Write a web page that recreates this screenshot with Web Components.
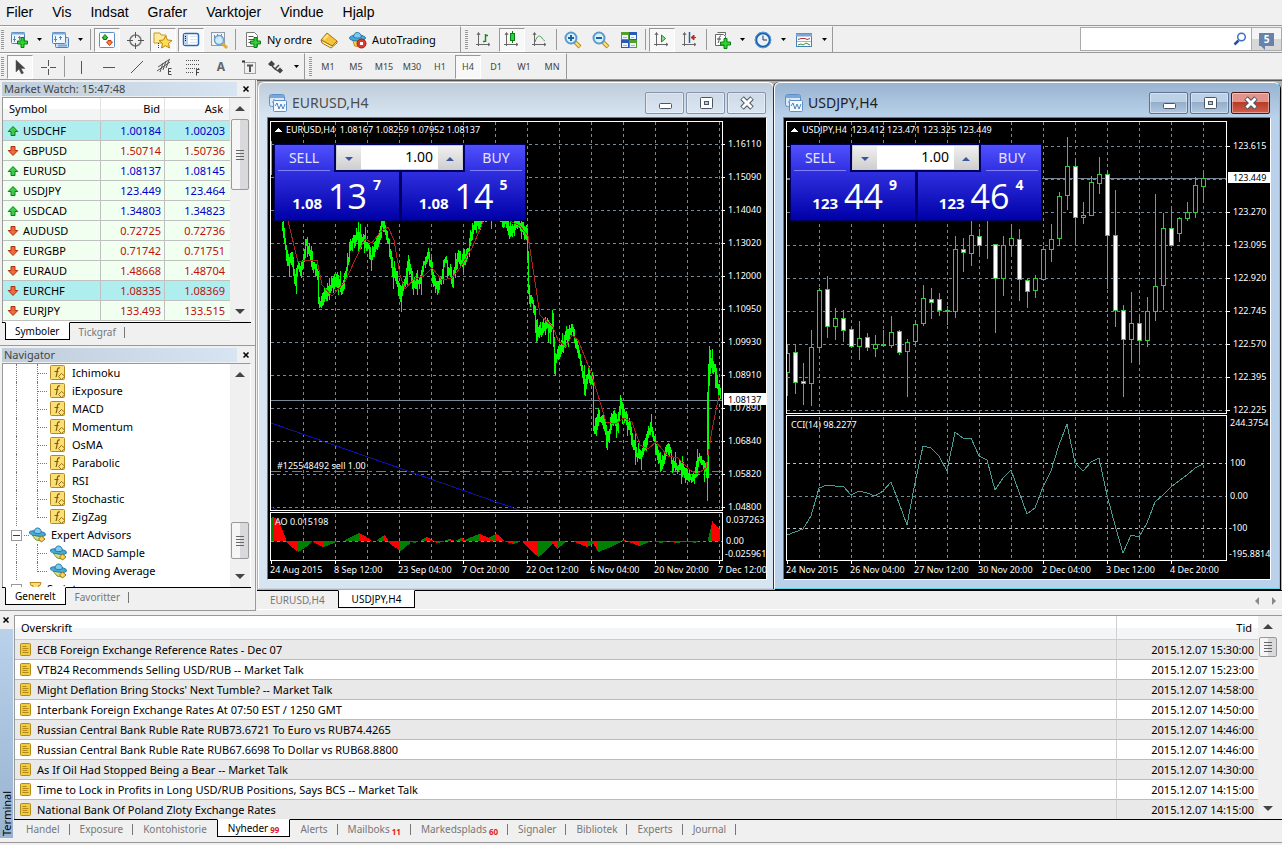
<!DOCTYPE html>
<html lang="da">
<head>
<meta charset="utf-8">
<title>Terminal</title>
<style>
  html, body {
    margin: 0;
    height: 100%;
  }

  body {
    background: #f0f0f0;
    color: #000;
    font: 11px/14px "Noto Sans", "Open Sans", sans-serif;
  }
</style>
</head>
<body>
<trade-app></trade-app>

<script>
const svg = (w, h, body) => `<svg width="${w}" height="${h}" viewBox="0 0 ${w} ${h}" aria-hidden="true">${body}</svg>`;

const axes = '<path d="M3.500 2v13M1 13.500h14M2 4l1.500-2.500L5 4M13 12l2 1.500-2 1.500" fill="none" stroke="#666"/>';
const plus = (x, y) => `<path transform="translate(${x} ${y})" d="M4 .5h3v3.500h3.500v3H7v3.500H4V7H.5V4H4z" fill="#2fd32f" stroke="#0a7d14"/>`;
const lens = (sign) => `<path d="M11 11l5 5" stroke="#b98a1c" stroke-width="4"/><path d="M11.500 11.500l4 4" stroke="#ffe27a" stroke-width="2"/><circle cx="7" cy="7" r="5.500" fill="#d9f1fc" stroke="#5a9bcb" stroke-width="2"/><path d="${sign}" stroke="#1f5f9e" stroke-width="2"/>`;
const hat = '<path d="M3.500 8l11 1-2 7-7-1z" fill="#f5cf4f" stroke="#c2921d"/><ellipse cx="8.500" cy="7" rx="8" ry="3" fill="#4aa8d8" stroke="#2379a8"/><path d="M4.500 6c0-6 7.500-6 8 0-2 1.500-6 1.500-8 0z" fill="#7dcbee" stroke="#2379a8"/>';

const icons = {
  newchart: svg(18, 18, '<rect x="1.500" y="1.500" width="13" height="11" rx="1" fill="#eef5fd" stroke="#4f7fb5"/><path d="M1 2.500h14" stroke="#7ba7d8" stroke-width="2"/><path d="M4.500 11V5M3 8.500h3M9.500 9V5M8 6.500h3" stroke="#5a86b8"/>' + plus(7, 6)),
  profiles: svg(18, 18, '<rect x="4.500" y="6.500" width="13" height="10" rx="1" fill="#cfe1f4" stroke="#4f7fb5"/><rect x="1.500" y="1.500" width="13" height="11" rx="1" fill="#eef5fd" stroke="#4f7fb5"/><path d="M1 2.500h14M7 14.500h9" stroke="#7ba7d8" stroke-width="2"/><path d="M4.500 11V5M3 8.500h3M9.500 9V5M8 6.500h3" stroke="#5a86b8"/>'),
  market: svg(18, 18, '<rect x="1.500" y="1.500" width="15" height="15" rx="1" fill="#fff" stroke="#5a8ec8"/><path d="M5.500 8.500V7H4l3-3.500L10 7H8.500v1.500z" fill="#39c639" stroke="#0d7d1a"/><path d="M10 9.500V11H8.500l3 3.500 3-3.500H13V9.500z" fill="#ff8455" stroke="#c33a14"/>'),
  cross: svg(18, 18, '<circle cx="9.500" cy="9.500" r="5.500" fill="none" stroke="#777" stroke-width="1.500"/><path d="M9.500 1v6M9.500 12v6M1 9.500h6M12 9.500h6" stroke="#555"/>'),
  favorites: svg(20, 18, '<path d="M1 2h6l1 2h5v8H1z" fill="#ffeb9c" stroke="#c79b22"/><path d="M5.500 12v5" stroke="#333" stroke-dasharray="1 1"/><path d="M12.500 5l2 4 4.500.5-3.500 3 1 4.500-4-2.300-4 2.300 1-4.500-3.500-3 4.500-.5z" fill="#ffdc55" stroke="#b8860b"/>'),
  terminal: svg(18, 18, '<rect x="1.500" y="2.500" width="15" height="12" rx="2" fill="#fff" stroke="#2c6ab5" stroke-width="1.500"/><rect x="2" y="3" width="4" height="11" fill="#b9d3f2"/><path d="M3 5.500h1M3 7.500h1M3 9.500h1" stroke="#111"/><path d="M8 5.500h7M8 8.500h7M8 11.500h7" stroke="#dbe6f5"/>'),
  tester: svg(19, 18, '<rect x="1.500" y="1.500" width="13" height="13" fill="#f2f5f8" stroke="#8e9aa8"/><path d="M4.500 4v7M7.500 3v5M11.500 3v5" stroke="#7d8894"/><path d="M12 12l5 5" stroke="#e0ad33" stroke-width="3"/><circle cx="9" cy="9" r="4.500" fill="#c9e8fb" fill-opacity=".8" stroke="#6ba3d0" stroke-width="1.500"/>'),
  neworder: svg(18, 18, '<path d="M2.500 1.500h8l3 3v11h-11z" fill="#fff" stroke="#777"/><path d="M4.500 5.500h5M4.500 8.500h6M4.500 11.500h3" stroke="#555"/>' + plus(6, 6)),
  book: svg(18, 18, '<path d="M7 2l10 8-5 5L1 9z" fill="#f4c53a" stroke="#a8730c"/><path d="M1 9l1 3 9 5 6-5v-2l-5 5z" fill="#fff2c2" stroke="#a8730c"/><path d="M8 4L4 8" stroke="#ffe89a" stroke-width="2"/>'),
  auto: svg(18, 18, hat + '<circle cx="12.500" cy="12.500" r="4.500" fill="#e0392a" stroke="#a81d12"/><rect x="11" y="11" width="3" height="3" fill="#fff"/>'),
  bars: svg(17, 17, axes + '<path d="M10.500 3v8M8 10.500h2M11 4.500h2" stroke="#119122" stroke-width="1.500" fill="none"/>'),
  candles: svg(17, 17, axes + '<path d="M9.500 0v12" stroke="#0b7d18"/><rect x="7.500" y="2.500" width="4" height="7" fill="#28d33c" stroke="#0b7d18"/>'),
  line: svg(17, 17, axes + '<path d="M4 11c2-7 5-7 7-4 1 2 2 2 3 3" fill="none" stroke="#4b9b58"/>'),
  zoomin: svg(18, 18, lens('M4 7h6M7 4v6')),
  zoomout: svg(18, 18, lens('M4 7h6')),
  tile: svg(18, 18, '<path d="M1 1h8v8H1z" fill="#4fa12b"/><path d="M9 1h8v8H9z" fill="#2859b8"/><path d="M1 9h8v8H1z" fill="#2859b8"/><path d="M9 9h8v8H9z" fill="#4fa12b"/><path d="M2 4h6v4H2zM10 4h6v4h-6zM2 12h6v4H2zM10 12h6v4h-6z" fill="#eef6ff"/><path d="M3 6.500h4M11 6.500h3M3 14.500h4M11 14.500h4" stroke="#9bb8d6"/>'),
  scroll: svg(17, 17, axes + '<path d="M8.500 4l4 3.500-4 3.500z" fill="#8fe08f" stroke="#119122"/>'),
  shift: svg(17, 17, axes + '<path d="M8.500 1v11" stroke="#2563a8" stroke-width="1.500"/><path d="M15 6.500h-4M13 4l-3 2.500L13 9z" fill="#b23414" stroke="#b23414"/>'),
  indicators: svg(18, 18, '<path d="M4.500 1.500h8v3M2.500 3.500h8l2 2v9h-10z" fill="#fff" stroke="#666"/><path d="M8 5c-3 0-1 4-3 7M4 8h4" fill="none" stroke="#444"/>' + plus(7, 7)),
  clock: svg(18, 18, '<circle cx="9" cy="9" r="7" fill="#e9f2fa" stroke="#1d5ea8" stroke-width="2.500"/><circle cx="9" cy="9" r="7.800" fill="none" stroke="#5aa0e0"/><path d="M9 4.500V9h4" fill="none" stroke="#333"/>'),
  template: svg(18, 18, '<rect x="1.500" y="2.500" width="15" height="13" fill="#fff" stroke="#4a80b8"/><path d="M1 4h16" stroke="#7ba7d8" stroke-width="3"/><path d="M2 10.500h14" stroke="#9bb8d6"/><path d="M3 8.500l3-1h4l2 1 3-1" fill="none" stroke="#a33"/><path d="M3 14l3-1 2 1 3-2 4 2" fill="none" stroke="#393"/>'),
  cursor: svg(12, 16, '<path d="M2 1v12l3-3 2.500 5 2-1L7 9.500h4z" fill="#444" stroke="#555" stroke-width=".5"/>'),
  hair: svg(18, 18, '<path d="M9.500 2v6M9.500 11v6M2 9.500h6M11 9.500h6" stroke="#555"/>'),
  vline: svg(18, 18, '<path d="M9.500 3v13" stroke="#555"/>'),
  hline: svg(18, 18, '<path d="M3 9.500h12" stroke="#555"/>'),
  trend: svg(18, 18, '<path d="M3 15L15 3" stroke="#555"/>'),
  channel: svg(18, 18, '<path d="M1 13L14 4M2 9l12-8M4 14l3-9M7 12l3-9M10 10l3-8" stroke="#555"/><path d="M15.500 10.500h-3v6h3M12.500 13.500h2.500" stroke="#444" fill="none"/>'),
  fibo: svg(18, 18, '<path d="M2 2.500h14M2 6.500h14M2 10.500h14M2 14.500h8" stroke="#555" stroke-dasharray="1 1"/><path d="M15.500 11.500h-3v6M12.500 14.500h2.500" stroke="#444" fill="none"/>'),
  textbox: svg(18, 18, '<rect x="4.500" y="4.500" width="11" height="11" fill="none" stroke="#555" stroke-dasharray="1 1"/><path d="M2 3.500h3" stroke="#333" stroke-width="2"/><path d="M7 7.500h6M10 7v7" stroke="#555" stroke-width="2"/>'),
  shapes: svg(18, 18, '<path d="M1 6l3.500-3.500L8 6l-2 2H3zM10 12.500h6l-3-3zM10 12.500l3 3 3-3z" fill="#444"/><path d="M5 8l3 3 4-4M8 11l3 2" fill="none" stroke="#444" stroke-width="1.500"/>'),
  down: svg(7, 4, '<path d="M1 0h5L3.500 3z" fill="#000"/>'),
  close: svg(8, 8, '<path d="M1.500 1.500l5 5M6.500 1.500l-5 5" stroke="#000" stroke-width="1.500"/>'),
  search: svg(14, 14, '<path d="M1.500 12.500l4-4" stroke="#1f4fa8" stroke-width="2.500"/><circle cx="8.500" cy="5" r="3.800" fill="#fff" stroke="#3f6fc4" stroke-width="1.500"/>'),
  rise: svg(12, 12, '<path d="M4 10.500V6.500H1.200L6 1.500l4.800 5H8v4z" fill="#3ccb4b" stroke="#0d7d1a"/>'),
  fall: svg(12, 12, '<path d="M4 1.500v4H1.200L6 10.500l4.800-5H8v-4z" fill="#f0693c" stroke="#b0300d"/>'),
  indicator: svg(16, 16, '<rect x=".5" y=".5" width="14" height="14" rx="1" fill="#fbdf75" stroke="#b58a22"/><path d="M10 3c-4-1-2 5-4 9M4.500 6.500h4" fill="none" stroke="#7a5a10" stroke-width="1.200"/><path d="M11.500 8.500l3.500 3-3.500 3-3-3z" fill="#ffe27a" stroke="#9b7413"/>'),
  expert: svg(18, 16, '<path d="M3 8l11 1-2 5-5-1z" fill="#d9e27a" stroke="#7d9440"/><ellipse cx="8.500" cy="6.500" rx="8" ry="2.500" transform="rotate(8 8 6)" fill="#4aa8d8" stroke="#2379a8"/><path d="M5 5.500c0-6 7-6 7.500 0-2 1.500-5.500 1.500-7.500 0z" fill="#7dcbee" stroke="#2379a8"/><path d="M12.500 9l3.500 3-3.500 3-3-3z" fill="#ffd34d" stroke="#9b7413"/>'),
  script: svg(14, 16, '<path d="M1 1.500h11l-1 3H9.500L11 15H3L4 4.500H2z" fill="#fbdf75" stroke="#b58a22"/>'),
  news: svg(12, 13, '<rect x=".5" y=".5" width="10" height="12" rx="1" fill="#f5cb3c" stroke="#b08a1a"/><path d="M2.500 3.500h4M2.500 5.500h6M2.500 7.500h5M2.500 9.500h6" stroke="#b08a1a"/>'),
  chartwin: svg(20, 20, '<rect x="1.500" y="1.500" width="15" height="12" rx="2" fill="#d9e9fa" stroke="#5d8fc9"/><path d="M2 3.500h14" stroke="#7ba7d8" stroke-width="3"/><path d="M4 9h4M6 6v5" stroke="#5d8fc9"/><rect x="5.500" y="7.500" width="13" height="11" rx="1" fill="#f4f9ff" stroke="#5d8fc9"/><path d="M7 13l2-3 2 6 2-5 2 5 2-5" fill="none" stroke="#4c83c4"/>'),
  min: svg(16, 16, '<rect x="2.500" y="8.500" width="12" height="5" rx="1" fill="#fff" stroke="#4b5566"/>'),
  max: svg(16, 16, '<rect x="2.500" y="2.500" width="12" height="11" rx="1" fill="#fff" stroke="#4b5566"/><rect x="6.500" y="6.500" width="4" height="3" fill="#b9cbe0" stroke="#4b5566"/>'),
  x: svg(16, 16, '<path d="M3 3l10 10M13 3L3 13" stroke="#4b5566" stroke-width="5"/><path d="M3.500 3.500l9 9M12.500 3.500l-9 9" stroke="#fff" stroke-width="3"/>'),
};

class MtIcon extends HTMLElement {
  constructor() {
    super();
    this.attachShadow({ mode: 'open' });
  }

  connectedCallback() {
    this.shadowRoot.innerHTML = `
      <style>
        :host { display: inline-flex; flex: none; }
        svg { display: block; }
      </style>
      ${icons[this.getAttribute('name')] || ''}`;
  }
}
customElements.define('mt-icon', MtIcon);

class MenuBar extends HTMLElement {
  constructor() {
    super();
    this.attachShadow({ mode: 'open' });
    const items = ['Filer', 'Vis', 'Indsat', 'Grafer', 'Varktojer', 'Vindue', 'Hjalp'];
    this.shadowRoot.innerHTML = `
      <style>
        :host {
          display: block;
          border-bottom: 1px solid #999;
        }
        nav {
          display: flex;
          gap: 19px;
          padding: 0 6px;
        }
        button {
          border: 0;
          padding: 0;
          background: none;
          font: 14px/25px "Liberation Sans", Arial, sans-serif;
        }
      </style>
      <nav>${items.map((item) => `<button>${item}</button>`).join('')}</nav>`;
  }
}
customElements.define('menu-bar', MenuBar);

/* One segment of a toolbar: grip on the left, edge on the right. */
class ToolGroup extends HTMLElement {
  constructor() {
    super();
    this.attachShadow({ mode: 'open' });
    this.shadowRoot.innerHTML = `
      <style>
        :host {
          display: flex;
          align-items: center;
          height: 26px;
          box-sizing: border-box;
          border-right: 1px solid #999;
          border-top: 1px solid #fff;
        }
        :host::before {
          content: '';
          width: 3px;
          height: 20px;
          margin: 0 2px 0 1px;
          background: repeating-linear-gradient(#999 0 1px, transparent 1px 2px);
        }
        :host(.next)::before { margin: 0 2px 0 4px; }
      </style>
      <slot></slot>`;
  }
}
customElements.define('tool-group', ToolGroup);

class ToolButton extends HTMLElement {
  constructor() {
    super();
    this.attachShadow({ mode: 'open' });
  }

  connectedCallback() {
    const icon = this.getAttribute('icon');
    const menu = this.hasAttribute('menu');
    this.shadowRoot.innerHTML = `
      <style>
        :host { display: flex; }
        button {
          display: flex;
          align-items: center;
          justify-content: center;
          gap: 5px;
          min-width: 26px;
          height: 24px;
          margin: 0 1px;
          padding: 0;
          border: 1px solid transparent;
          background: none;
          color: #000;
          font: inherit;
        }
        :host([small]) button { color: #444; font-size: 9px; }
        :host([pressed]) button {
          border-color: #999 #fff #fff #999;
          background: #f8f8f8;
        }
        :host([wide]) button { padding: 0 1px 0 4px; }
        :host([menu]) button { min-width: 24px; }
        :host([menu]) .menu {
          width: 15px;
          min-width: 15px;
          margin: 0;
        }
      </style>
      <button title="${this.getAttribute('label') || ''}">
        ${icon ? `<mt-icon name="${icon}"></mt-icon>` : ''}<slot></slot>
      </button>
      ${menu ? '<button class="menu" title="Menu"><mt-icon name="down"></mt-icon></button>' : ''}`;
  }
}
customElements.define('tool-button', ToolButton);

class ToolBars extends HTMLElement {
  constructor() {
    super();
    this.attachShadow({ mode: 'open' });
    const periods = ['M1', 'M5', 'M15', 'M30', 'H1', 'H4', 'D1', 'W1', 'MN'];
    this.shadowRoot.innerHTML = `
      <style>
        :host { display: block; }
        .row {
          display: flex;
          border-bottom: 1px solid #999;
        }
        .sep {
          width: 1px;
          height: 21px;
          margin: 0 2px;
          background: #999;
        }
        .first { padding-right: 21px; }
        .search {
          display: flex;
          margin: 1px 0 1px auto;
          height: 22px;
          border: 1px solid #aaa;
          background: #fff;
        }
        .search input {
          width: 140px;
          border: 0;
          padding: 0 4px;
          outline: 0;
          background: none;
          font: inherit;
        }
        .search button {
          display: flex;
          align-items: center;
          border: 0;
          padding: 0 4px;
          background: none;
        }
        .search .mail {
          width: 30px;
          justify-content: center;
          border-left: 1px solid #aaa;
          background: linear-gradient(#f4f4f4 50%, #d8d8d8 50%);
        }
        .badge {
          position: relative;
          padding: 0 5px;
          background: #6782ad;
          color: #fff;
          font: 700 10px/13px "Noto Sans", sans-serif;
        }
        .badge::after {
          content: '';
          position: absolute;
          left: 2px;
          top: 13px;
          border: 2px solid transparent;
          border-top-color: #6782ad;
          border-right-color: #6782ad;
        }
        .letter { color: #666; font-weight: 700; font-size: 12px; }
      </style>
      <div class="row">
        <tool-group class="first">
          <tool-button icon="newchart" label="Ny graf" menu></tool-button>
          <tool-button icon="profiles" label="Profiler" menu></tool-button>
          <span class="sep"></span>
          <tool-button icon="market" label="Market Watch" pressed></tool-button>
          <tool-button icon="cross" label="Data"></tool-button>
          <tool-button icon="favorites" label="Navigator" pressed></tool-button>
          <tool-button icon="terminal" label="Terminal" pressed></tool-button>
          <tool-button icon="tester" label="Strategi Tester"></tool-button>
          <span class="sep"></span>
          <tool-button icon="neworder" wide>Ny ordre</tool-button>
          <tool-button icon="book" label="MetaEditor"></tool-button>
          <tool-button icon="auto" wide>AutoTrading</tool-button>
        </tool-group>
        <tool-group class="next">
          <tool-button icon="bars" label="Barer"></tool-button>
          <tool-button icon="candles" label="Candlesticks" pressed></tool-button>
          <tool-button icon="line" label="Linje"></tool-button>
          <span class="sep"></span>
          <tool-button icon="zoomin" label="Zoom ind"></tool-button>
          <tool-button icon="zoomout" label="Zoom ud"></tool-button>
          <tool-button icon="tile" label="Fliser"></tool-button>
          <span class="sep"></span>
          <tool-button icon="scroll" label="Auto Scroll" pressed></tool-button>
          <tool-button icon="shift" label="Graf Skift"></tool-button>
          <span class="sep"></span>
          <tool-button icon="indicators" label="Indikatorer" menu></tool-button>
          <tool-button icon="clock" label="Perioder" menu></tool-button>
          <tool-button icon="template" label="Skabeloner" menu></tool-button>
        </tool-group>
        <div class="search">
          <input aria-label="Search">
          <button title="Search"><mt-icon name="search"></mt-icon></button>
          <button class="mail"><span class="badge">5</span></button>
        </div>
      </div>
      <div class="row">
        <tool-group>
          <tool-button icon="cursor" label="Cursor" pressed></tool-button>
          <tool-button icon="hair" label="Crosshair"></tool-button>
          <span class="sep"></span>
          <tool-button icon="vline" label="Vertikal linje"></tool-button>
          <tool-button icon="hline" label="Horisontal linje"></tool-button>
          <tool-button icon="trend" label="Trendlinje"></tool-button>
          <tool-button icon="channel" label="Kanal"></tool-button>
          <tool-button icon="fibo" label="Fibonacci"></tool-button>
          <tool-button label="Tekst"><span class="letter">A</span></tool-button>
          <tool-button icon="textbox" label="Tekst label"></tool-button>
          <tool-button icon="shapes" label="Pile" menu></tool-button>
        </tool-group>
        <tool-group class="next">
          ${periods.map((p) => `<tool-button small ${p === 'H4' ? 'pressed' : ''}>${p}</tool-button>`).join('')}
        </tool-group>
      </div>`;
  }
}
customElements.define('tool-bars', ToolBars);

class ScrollRail extends HTMLElement {
  constructor() {
    super();
    this.attachShadow({ mode: 'open' });
  }

  connectedCallback() {
    const before = this.getAttribute('before');
    const after = this.getAttribute('after');
    this.shadowRoot.innerHTML = `
      <style>
        :host {
          display: flex;
          flex-direction: column;
          align-items: center;
          flex: none;
          width: 20px;
          background: #f0f0f0;
        }
        button {
          display: flex;
          align-items: center;
          justify-content: center;
          flex: none;
          width: 100%;
          height: 21px;
          border: 0;
          padding: 0;
          background: none;
        }
        .thumb {
          display: flex;
          align-items: center;
          justify-content: center;
          flex: none;
          width: 18px;
          height: ${this.getAttribute('size')}px;
          box-sizing: border-box;
          border: 1px solid #999;
          border-radius: 2px;
          background: linear-gradient(90deg, #f5f5f5 50%, #d9d9dc 50%);
        }
        .thumb::before {
          content: '';
          width: 8px;
          height: 10px;
          background: repeating-linear-gradient(#666 0 1px, transparent 1px 3px);
        }
      </style>
      <button title="Op">${svg(10, 5, '<path d="M0 5l5-5 5 5z" fill="#444"/>')}</button>
      <div style="flex:${before}"></div>
      <div class="thumb"></div>
      <div style="flex:${after}"></div>
      <button title="Ned">${svg(10, 5, '<path d="M0 0h10L5 5z" fill="#444"/>')}</button>`;
  }
}
customElements.define('scroll-rail', ScrollRail);

/* labels="One|Two:99" where the part after the colon is a counter. */
class TabStrip extends HTMLElement {
  constructor() {
    super();
    this.attachShadow({ mode: 'open' });
  }

  connectedCallback() {
    const active = Number(this.getAttribute('active'));
    const tabs = this.getAttribute('labels').split('|').map((label, i) => {
      const [text, count] = label.split(':');
      return `<button role="tab" aria-selected="${i === active}">${text}${count ? `<b>${count}</b>` : ''}</button>`;
    });
    this.shadowRoot.innerHTML = `
      <style>
        :host {
          display: flex;
          border-top: 1px solid #000;
          padding-left: var(--tab-inset, 3px);
          --pad: var(--tab-pad, 9px);
          font-size: 10px;
        }
        button {
          display: flex;
          align-items: center;
          height: 18px;
          padding: 0 var(--pad);
          border: 0;
          background: none;
          color: #777;
          font: inherit;
          position: relative;
        }
        button[aria-selected="false"]::after {
          content: '';
          position: absolute;
          right: 0;
          top: 4px;
          width: 1px;
          height: 11px;
          background: #777;
        }
        :host([plain]) button::after { display: none; }
        button[aria-selected="true"] {
          margin-top: -1px;
          border: 1px solid #000;
          border-top-color: #fff;
          background: #fff;
          color: #000;
        }
        button:has(+ [aria-selected="true"])::after { display: none; }
        b {
          align-self: flex-end;
          margin-left: 2px;
          color: #e02020;
          font-size: 8px;
          line-height: 13px;
        }
      </style>
      ${tabs.join('')}
      <slot></slot>`;
  }
}
customElements.define('tab-strip', TabStrip);

class DockPanel extends HTMLElement {
  constructor() {
    super();
    this.attachShadow({ mode: 'open' });
  }

  connectedCallback() {
    this.shadowRoot.innerHTML = `
      <style>
        :host {
          display: flex;
          flex-direction: column;
          padding: 1px 4px 4px 2px;
          border-right: 1px solid #999;
        }
        header {
          display: flex;
          align-items: center;
          height: 15px;
          margin-bottom: 1px;
        }
        h2 {
          flex: 1;
          margin: 0;
          padding-left: 2px;
          background: linear-gradient(90deg, #bfcddb, #d7e4f2);
          color: #444;
          font: inherit;
        }
        header button {
          display: flex;
          border: 0;
          padding: 0 1px 0 5px;
          background: none;
        }
        .box {
          display: flex;
          flex: 1;
          border: 1px solid #999;
          border-bottom: 0;
          border-right-color: #fff;
          background: #fff;
          min-height: 0;
        }
        slot { display: block; flex: 1; min-width: 0; }
      </style>
      <header><h2>${this.getAttribute('heading')}</h2><button title="Luk"><mt-icon name="close"></mt-icon></button></header>
      <div class="box">
        <slot></slot>
        <scroll-rail before="${this.dataset.before}" size="${this.dataset.size}" after="${this.dataset.after}"></scroll-rail>
      </div>
      <tab-strip labels="${this.getAttribute('tabs')}" active="0"></tab-strip>`;
  }
}
customElements.define('dock-panel', DockPanel);

const quotes = [
  ['USDCHF', '1.00184', '1.00203', 'rise', true],
  ['GBPUSD', '1.50714', '1.50736', 'fall'],
  ['EURUSD', '1.08137', '1.08145', 'rise'],
  ['USDJPY', '123.449', '123.464', 'rise'],
  ['USDCAD', '1.34803', '1.34823', 'rise'],
  ['AUDUSD', '0.72725', '0.72736', 'fall'],
  ['EURGBP', '0.71742', '0.71751', 'fall'],
  ['EURAUD', '1.48668', '1.48704', 'fall'],
  ['EURCHF', '1.08335', '1.08369', 'fall', true],
  ['EURJPY', '133.493', '133.515', 'fall'],
];

class MarketWatch extends HTMLElement {
  constructor() {
    super();
    this.attachShadow({ mode: 'open' });
    this.shadowRoot.innerHTML = `
      <style>
        :host { display: block; padding-bottom: 1px; }
        table {
          width: 100%;
          border-collapse: separate;
          border-spacing: 0;
          table-layout: fixed;
        }
        th {
          height: 22px;
          padding: 0 6px;
          border-bottom: 1px solid #ccc;
          border-right: 1px solid #e2e2e2;
          background: linear-gradient(#fff 50%, #f3f4f6 50%);
          font-weight: 400;
          text-align: right;
        }
        th:first-child { text-align: left; width: 85px; }
        th:nth-child(2) { width: 53px; padding-right: 4px; }
        td {
          height: 19px;
          padding: 0 5px 0 0;
          border-bottom: 1px solid #c0c0c0;
          border-right: 1px solid #c0c0c0;
          background: #f0fff0;
          text-align: right;
        }
        td:nth-child(2) { padding-right: 3px; }
        td:last-child { border-right: 0; }
        .name { display: flex; align-items: center; gap: 4px; padding-left: 4px; }
        .hot td { background: #afeeee; }
        .rise { color: #0000c8; }
        .fall { color: #c01010; }
      </style>
      <table>
        <tr><th>Symbol</th><th>Bid</th><th>Ask</th></tr>
        ${quotes.map(([name, bid, ask, dir, hot]) => `
          <tr class="${hot ? 'hot' : ''}">
            <td><span class="name"><mt-icon name="${dir}"></mt-icon>${name}</span></td>
            <td class="${dir}">${bid}</td>
            <td class="${dir}">${ask}</td>
          </tr>`).join('')}
      </table>`;
  }
}
customElements.define('market-watch', MarketWatch);

class NavTree extends HTMLElement {
  constructor() {
    super();
    this.attachShadow({ mode: 'open' });
    const indicators = ['Ichimoku', 'iExposure', 'MACD', 'Momentum', 'OsMA', 'Parabolic', 'RSI', 'Stochastic', 'ZigZag'];
    const experts = ['MACD Sample', 'Moving Average'];
    const leaf = (icon) => (name, i, all) => `
      <li class="leaf ${i === all.length - 1 ? 'last' : ''}"><i class="trunk"></i><i class="branch"></i><mt-icon name="${icon}"></mt-icon><span>${name}</span></li>`;
    this.shadowRoot.innerHTML = `
      <style>
        :host { display: block; height: 223px; overflow: hidden; }
        ul { list-style: none; margin: 0; padding: 0; }
        li { display: flex; align-items: center; height: 18px; }
        .trunk {
          width: 20px;
          height: 18px;
          margin-left: 13px;
          border-left: 1px dotted #777;
        }
        .branch {
          width: 10px;
          height: 18px;
          margin-right: 2px;
          border-left: 1px dotted #777;
          background: repeating-linear-gradient(90deg, #777 0 1px, transparent 1px 2px) 0 9px / 100% 1px no-repeat;
        }
        .last .branch { height: 10px; align-self: flex-start; }
        .leaf mt-icon { width: 18px; }
        .leaf span { margin-left: 4px; }
        .root button {
          width: 11px;
          height: 11px;
          margin: 0 2px 0 8px;
          border: 1px solid #999;
          padding: 0;
          background: linear-gradient(#336 0 0) center / 7px 1px no-repeat #fff;
        }
        .root i {
          width: 5px;
          height: 1px;
          background: repeating-linear-gradient(90deg, #777 0 1px, transparent 1px 2px);
        }
        .root span { margin-left: 4px; }
      </style>
      <ul>
        ${indicators.map(leaf('indicator')).join('')}
        <li class="root"><button title="Fold"></button><i></i><mt-icon name="expert"></mt-icon><span>Expert Advisors</span></li>
        ${experts.map(leaf('expert')).join('')}
        <li class="root"><button title="Fold"></button><i></i><mt-icon name="script"></mt-icon><span>Scripts</span></li>
      </ul>`;
  }
}
customElements.define('nav-tree', NavTree);

class TradePanel extends HTMLElement {
  constructor() {
    super();
    this.attachShadow({ mode: 'open' });
  }

  connectedCallback() {
    const side = (label, [base, big, pip]) => `
      <button class="deal"><span class="label">${label}</span><span class="price"><b>${base}</b><span class="big">${big}</span><sup>${pip}</sup></span></button>`;
    this.shadowRoot.innerHTML = `
      <style>
        :host {
          display: grid;
          grid-template-columns: 1fr 1fr;
          gap: 3px;
          width: 252px;
          height: 77px;
          border: 1px solid #000060;
          box-sizing: border-box;
          background: #000060;
          color: #fff;
        }
        .deal {
          display: flex;
          flex-direction: column;
          border: 0;
          padding: 0;
          background: linear-gradient(#5050ff, #3030e0 35%, #0000a8);
          color: inherit;
          font: inherit;
        }
        .label {
          width: 52px;
          margin: 0 3px;
          border-bottom: 1px solid #8080ff;
          font-size: 14px;
          line-height: 25px;
          color: #e4e4ff;
        }
        .deal:last-of-type .label { align-self: flex-end; }
        .price {
          display: flex;
          align-items: baseline;
          justify-content: flex-end;
          gap: 6px;
          width: 106px;
          height: 46px;
        }
        b { font-size: 15px; }
        .big {
          font: 34px/50px "Open Sans", "Noto Sans", sans-serif;
        }
        sup {
          align-self: flex-start;
          font-size: 14px;
          font-weight: 700;
          line-height: 28px;
        }
        .volume {
          position: absolute;
          left: 61px;
          top: 0;
          display: flex;
          width: 127px;
          height: 25px;
          box-sizing: border-box;
          border: 1px solid #ccc;
          outline: 2px solid #000060;
          background: #fff;
        }
        .volume button {
          width: 24px;
          border: 0;
          padding: 0;
          background: linear-gradient(#f0f0f0, #cfcfcf);
        }
        .volume input {
          flex: 1;
          min-width: 0;
          border: 0;
          padding: 0 5px 2px;
          outline: 0;
          font: 14px/20px "Noto Sans", sans-serif;
          text-align: right;
        }
      </style>
      ${side('SELL', this.dataset.sell.split(' '))}
      ${side('BUY', this.dataset.buy.split(' '))}
      <div class="volume">
        <button title="Mindre">${svg(8, 5, '<path d="M0 0h8L4 4z" fill="#3a55a0"/>')}</button>
        <input aria-label="Volume" value="1.00">
        <button title="Mere">${svg(8, 5, '<path d="M0 4h8L4 0z" fill="#3a55a0"/>')}</button>
      </div>`;
  }
}
customElements.define('trade-panel', TradePanel);

const range = (from, to, step) => {
  const out = [];
  for (let v = from; v <= to; v += step) out.push(v);
  return out;
};

const grid = (xs, ys, [left, right], [top, bottom], subBottom) => `
  <g stroke="#778899" stroke-dasharray="3 3">
    ${ys.map((y) => `<path d="M${left} ${y}.5H${right}"/>`).join('')}
    ${xs.map((x) => `<path d="M${x}.5 ${top}V${bottom}M${x}.5 ${bottom + 4}V${subBottom}"/>`).join('')}
  </g>`;

const frame = (left, right, bottom) => `
  <path d="M${left}.5 121.500H${right}.5V${bottom}.5H${left}.5zM${left}.5 ${bottom + 2}.5H${right}.5V560.500H${left}.5z" fill="none" stroke="#fff"/>`;

const priceLabels = (x, first, step, labels) => labels.map((label, i) => {
  const y = first + step * i;
  return label ? `<path d="M${x - 6} ${y}.5h3" stroke="#fff"/><text x="${x}" y="${y + 3}">${label}</text>` : '';
}).join('');

const timeLabels = (x, labels) => labels.map((label, i) => `
  <path d="M${x + 64 * i + 1}.5 561v3" stroke="#fff"/><text x="${x + 64 * i}" y="573">${label}</text>`).join('');

const toPath = (points) => `M${points.map((p) => p.join(' ')).join('L')}`;

/* Middle of each EURUSD bar; the bars between two points are interpolated. */
const eurPrices = [
  [281, 225], [284, 238], [288, 265], [291, 255], [294, 282], [297, 268], [301, 268], [305, 247], [308, 250], [311, 258],
  [314, 266], [317, 272], [318, 298], [320, 304], [324, 294], [328, 291], [332, 283], [336, 278], [341, 290], [346, 270],
  [349, 250], [353, 242], [356, 232], [360, 243], [364, 238], [368, 250], [371, 255], [375, 243], [379, 236], [382, 222],
  [386, 236], [389, 250], [392, 272], [396, 280], [400, 298], [404, 285], [408, 262], [412, 286], [416, 280], [420, 282],
  [423, 264], [427, 256], [431, 268], [435, 286], [440, 282], [444, 258], [447, 270], [452, 280], [457, 258], [462, 262],
  [466, 254], [470, 240], [474, 225], [478, 224], [484, 214], [498, 212], [503, 222], [507, 228], [511, 234], [515, 224],
  [519, 226], [523, 230], [526, 232], [528, 290], [531, 305], [533, 305], [536, 336], [541, 328], [546, 324], [550, 330],
  [552, 318], [554, 366], [557, 354], [562, 344], [567, 330], [572, 332], [576, 346], [580, 362], [584, 386], [588, 376],
  [592, 381], [593, 430], [597, 418], [600, 414], [604, 426], [607, 438], [611, 420], [614, 418], [617, 428], [620, 402],
  [624, 414], [628, 426], [631, 436], [635, 450], [639, 458], [643, 448], [646, 440], [650, 424], [654, 440], [657, 460],
  [661, 463], [665, 450], [669, 446], [672, 466], [678, 465], [683, 470], [688, 477], [692, 480], [697, 462], [701, 464],
  [705, 470], [707, 474], [708, 372], [710, 360], [713, 368], [716, 382], [720, 396],
];

const eurAverage = [
  [[288, 221], [298, 262], [308, 260], [317, 260], [322, 285], [332, 296], [345, 282], [355, 260], [365, 239], [372, 243], [380, 232],
    [388, 227], [394, 240], [400, 275], [405, 289], [413, 280], [425, 275], [432, 268], [442, 280], [452, 278], [460, 268], [472, 248], [483, 222]],
  [[508, 220], [520, 226], [528, 236], [534, 275], [540, 315], [553, 327], [558, 340], [566, 347], [572, 335], [578, 340], [590, 370], [598, 395],
    [606, 422], [616, 424], [624, 418], [632, 422], [640, 445], [648, 449], [656, 442], [668, 456], [678, 458], [690, 470], [697, 474],
    [706, 468], [712, 430], [719, 395]],
];

/* start, peak, end, height of each swing of the oscillator */
const aoSwings = [
  [286, 298, 312, -11], [313, 323, 337, -6], [345, 359, 371, 8], [377, 384, 388, 6], [388, 400, 411, -10], [411, 414, 418, -2],
  [421, 426, 433, 4], [434, 437, 444, -2], [445, 449, 454, 2], [456, 461, 466, 3], [464, 479, 494, 7], [484, 496, 504, 7],
  [505, 513, 520, -3], [523, 538, 554, -16], [552, 557, 565, -8], [574, 587, 595, -6], [593, 598, 621, -11], [622, 624, 626, 1],
  [628, 639, 650, -5], [655, 660, 667, -2], [670, 675, 690, -2], [690, 694, 698, -2],
];

function eurusdChart() {
  let seed = 7;
  const rand = () => {
    seed = (seed * 16807) % 2147483647;
    return seed / 2147483647;
  };
  let bars = 'M271.500 141v34';
  let last = eurPrices[0][1];
  eurPrices.slice(1).forEach(([x1, y1], i) => {
    const [x0, y0] = eurPrices[i];
    for (let x = x0 + 1; x <= x1; x += 1) {
      const y = y0 + ((y1 - y0) * (x - x0)) / (x1 - x0) + rand() * 8 - 4;
      const above = rand() > 0.93 ? 12 : rand() * 6;
      const below = rand() > 0.93 ? 12 : rand() * 6;
      bars += `M${x}.5 ${Math.round(Math.min(y, last) - above - 1)}V${Math.round(Math.max(y, last) + below + 1)}`;
      last = y;
    }
  });
  bars += 'M620.500 395v20M707.500 392v109M709.500 346v40';

  let up = 'M271.500 541v-23M272.500 541v-24M273.500 541v-24';
  let down = range(274, 285, 1).map((x) => `M${x}.5 541v-${Math.round(23 * (1 - ((x - 274) / 12) ** 1.6))}`).join('');
  aoSwings.forEach(([from, peak, to, height]) => {
    for (let x = from; x < to; x += 1) {
      const t = x < peak ? (x - from + 1) / (peak - from + 1) : (to - x) / (to - peak);
      const size = Math.max(1, Math.round(Math.abs(height) * t ** 0.8));
      const bar = `M${x}.5 541v${height > 0 ? -size : size}`;
      if ((x < peak) === (height > 0)) up += bar;
      else down += bar;
    }
  });
  up += range(708, 712, 1).map((x) => `M${x}.5 541v-${(x - 707) * 4}`).join('');
  down += range(712, 719, 1).map((x) => `M${x}.5 541v-${19 - (x - 712)}`).join('');

  return `
    ${grid(range(303, 719, 32), range(144, 507, 33), [271, 722], [122, 510], 560)}
    <path d="M271 400.500h451" stroke="#778899"/>
    <path d="M271 541.500h451" stroke="#778899" stroke-dasharray="3 3"/>
    <path d="M271 471.500h451" stroke="#4f9a4f" stroke-dasharray="10 4 3 4"/>
    <path d="M271 423L519 510M271 507l6 3" stroke="#1010a8"/>
    <clipPath id="eurplot"><path d="M271 122h451v388H271z"/></clipPath>
    <path d="${bars}" stroke="#0f0" clip-path="url(#eurplot)"/>
    <g fill="none" stroke="#b02020">${eurAverage.map((part) => `<path d="${toPath(part)}"/>`).join('')}</g>
    <path d="${up}" stroke="#008000"/><path d="${down}" stroke="#f00"/>
    ${frame(270, 722, 510)}
    ${priceLabels(728, 144, 33, ['1.16110', '1.15090', '1.14040', '1.13020', '1.12000', '1.10950', '1.09930', '1.08910', '1.07890', '1.06840', '1.05820', '1.04800'])}
    <rect x="724" y="393" width="42" height="12" fill="#fff"/>
    <text x="728" y="403" style="fill:#000">1.08137</text>
    <text x="726" y="523">0.037263</text><text x="726" y="544">0.00</text><text x="725" y="557">-0.025961</text>
    ${timeLabels(270, ['24 Aug 2015', '8 Sep 12:00', '23 Sep 04:00', '7 Oct 20:00', '22 Oct 12:00', '6 Nov 04:00', '20 Nov 20:00', '7 Dec 12:00'])}
    <path d="M274 132l4-4 4 4z" fill="#fff"/>
    <text x="286" y="133">EURUSD,H4&#160; 1.08167 1.08259 1.07952 1.08137</text>
    <text x="277" y="469">#125548492 sell 1.00</text>
    <text x="275" y="525">AO 0.015198</text>`;
}

/* high, low, body top, body bottom in thirds of a pixel; 1 marks a falling candle */
const jpyCandles = [
  [795, 948, 820, 878], [792, 942, 817, 908, 1], [849, 975, 905, 910, 1], [750, 978, 802, 911], [625, 815, 631, 803],
  [588, 774, 629, 738, 1], [686, 780, 715, 740], [690, 786, 715, 752, 1], [742, 805, 748, 800, 1], [723, 840, 774, 800],
  [760, 815, 772, 803, 1], [765, 831, 794, 805], [750, 800, 794, 797], [708, 806, 757, 797], [752, 825, 754, 818, 1],
  [777, 951, 787, 815], [723, 803, 733, 785], [617, 738, 655, 731], [625, 717, 658, 668, 1], [639, 708, 658, 690, 1],
  [680, 735, 690, 694], [468, 716, 508, 695], [474, 576, 508, 517, 1], [425, 558, 466, 521], [448, 522, 469, 497, 1],
  [425, 537, 495, 497], [492, 759, 493, 594, 1], [470, 648, 495, 594], [438, 522, 475, 497], [447, 665, 478, 599, 1],
  [598, 684, 600, 635, 1], [585, 654, 595, 632], [500, 599, 508, 597], [432, 548, 478, 509], [338, 500, 349, 476],
  [171, 390, 259, 347], [243, 495, 259, 412, 1], [366, 434, 405, 412], [290, 410, 307, 407], [231, 343, 283, 311],
  [270, 628, 283, 467, 1], [330, 743, 466, 692, 1], [675, 953, 691, 779, 1], [636, 849, 730, 779], [705, 852, 730, 782, 1],
  [652, 801, 694, 782], [343, 725, 619, 695], [399, 692, 445, 617], [387, 501, 445, 495, 1], [412, 488, 416, 461],
  [366, 425, 397, 416], [291, 416, 315, 398], [279, 366, 295, 318],
];

const cci = [
  404, 395, 387, 347, 265, 256, 259, 259, 286, 274, 279, 287, 274, 247, 310, 376, 250, 139, 145, 169, 213, 97, 115, 115, 167, 181, 271,
  233, 209, 275, 343, 325, 261, 214, 135, 71, 188, 214, 186, 175, 286, 376, 460, 405, 412, 370, 307, 286, 262, 243, 224, 204, 192,
];

function usdjpyChart() {
  const y = (v) => 80 + Math.floor(v / 3);
  const candles = jpyCandles.map(([high, low, top, bottom, falling], i) => {
    const x = 787 + 8 * i;
    return `<path d="M${x}.5 ${y(high)}V${y(low)}"/><rect x="${x - 2}.5" y="${y(top)}.5" width="4" height="${y(bottom) - y(top)}" fill="${falling ? '#fff' : '#000'}"/>`;
  }).join('');
  const cciPoints = cci.map((v, i) => [787 + 8 * i, 400 + Math.round(v / 3)]);

  return `
    ${grid(range(819, 1203, 32), range(146, 410, 33), [787, 1226], [122, 413], 560)}
    <path d="M787 178.500h439" stroke="#778899"/>
    <path d="M787 463.500h439M787 528.500h439" stroke="#c0c0c0" stroke-dasharray="3 3"/>
    <path d="M787 496.500h439" stroke="#778899" stroke-dasharray="3 3"/>
    <clipPath id="jpyplot"><path d="M787 122h439v291H787z"/></clipPath>
    <g stroke="#32cd32" clip-path="url(#jpyplot)">${candles}</g>
    <path d="${toPath(cciPoints)}" fill="none" stroke="#4a9b93"/>
    ${frame(786, 1226, 413)}
    ${priceLabels(1233, 146, 33, ['123.615', '', '123.270', '123.095', '122.920', '122.745', '122.570', '122.395', '122.225'])}
    <rect x="1228" y="172" width="42" height="11" fill="#fff"/>
    <text x="1233" y="181" style="fill:#000">123.449</text>
    <text x="1230" y="426">244.3754</text><text x="1230" y="466">100</text><text x="1230" y="499">0.00</text><text x="1229" y="531">-100</text><text x="1229" y="557">-195.8814</text>
    ${timeLabels(786, ['24 Nov 2015', '26 Nov 04:00', '27 Nov 12:00', '30 Nov 20:00', '2 Dec 04:00', '3 Dec 12:00', '4 Dec 20:00'])}
    <path d="M790 132l4-4 4 4z" fill="#fff"/>
    <text x="802" y="133">USDJPY,H4&#160; 123.412 123.471 123.325 123.449</text>
    <text x="791" y="428">CCI(14) 98.2277</text>`;
}

const charts = {
  EURUSD: { left: 268, width: 498, draw: eurusdChart },
  USDJPY: { left: 784, width: 486, draw: usdjpyChart },
};

class ChartWindow extends HTMLElement {
  constructor() {
    super();
    this.attachShadow({ mode: 'open' });
  }

  connectedCallback() {
    const symbol = this.getAttribute('symbol');
    const { left, width, draw } = charts[symbol];
    this.shadowRoot.innerHTML = `
      <style>
        :host {
          --frame: #d7e4f2;
          --bar: #bfcddb;
          display: flex;
          flex-direction: column;
          box-sizing: border-box;
          min-width: 0;
          padding: 0 6px 8px 8px;
          border: 1px solid #fff;
          border-radius: 6px 6px 0 0;
          border-bottom-color: #c8d4e0;
          background: linear-gradient(var(--bar), var(--frame) 34px);
        }
        :host([active]) {
          --frame: #b9d1ea;
          --bar: #99b4d1;
          padding-right: 8px;
          border-right-color: #5fd8e8;
          border-bottom-color: #5fd8e8;
          box-shadow: 1px 1px 0 #000, -1px 0 0 #333;
        }
        header {
          display: flex;
          align-items: center;
          height: 34px;
          padding: 5px 0 0 1px;
          box-sizing: border-box;
        }
        h2 {
          flex: 1;
          margin: 0 0 0 4px;
          color: #4c4c4c;
          font: 14px/20px "Noto Sans", sans-serif;
        }
        :host([active]) h2 { color: #1e1e1e; }
        header button {
          display: flex;
          align-items: center;
          justify-content: center;
          width: 39px;
          height: 22px;
          margin: 0 0 0 2px;
          padding: 0;
          border: 1px solid #8494ad;
          border-radius: 2px;
          background: rgba(255, 255, 255, .15);
          box-shadow: inset 0 0 0 1px rgba(255, 255, 255, .4);
        }
        header button:last-child { margin-right: 1px; }
        :host([active]) header button {
          border-color: #5f7391;
          background: linear-gradient(#bcd0e6 45%, #93adca 45%, #b0c8e2);
        }
        :host([active]) header button:last-child {
          border-color: #4c1a1a;
          background: linear-gradient(#e3948a 45%, #b83a25 45%, #d0604c);
        }
        .client {
          position: relative;
          flex: 1;
          overflow: hidden;
          background: #000;
          border: 1px solid #777;
          border-right-color: #fff;
          border-bottom-color: #fff;
        }
        .plot {
          display: block;
          shape-rendering: crispEdges;
        }
        .plot text {
          fill: #fff;
          font: 9px "Noto Sans", sans-serif;
        }
        trade-panel {
          position: absolute;
          left: 6px;
          top: 26px;
        }
      </style>
      <header>
        <mt-icon name="chartwin"></mt-icon>
        <h2>${symbol},H4</h2>
        <button title="Minimer"><mt-icon name="min"></mt-icon></button>
        <button title="Maksimer"><mt-icon name="max"></mt-icon></button>
        <button title="Luk"><mt-icon name="x"></mt-icon></button>
      </header>
      <div class="client">
        <svg class="plot" width="${width}" height="461" viewBox="${left} 118 ${width} 461">${draw()}</svg>
        <trade-panel data-sell="${this.dataset.sell}" data-buy="${this.dataset.buy}"></trade-panel>
      </div>`;
  }
}
customElements.define('chart-window', ChartWindow);

const news = [
  ['ECB Foreign Exchange Reference Rates - Dec 07', '15:30:00'],
  ['VTB24 Recommends Selling USD/RUB -- Market Talk', '15:23:00'],
  ['Might Deflation Bring Stocks\' Next Tumble? -- Market Talk', '14:58:00'],
  ['Interbank Foreign Exchange Rates At 07:50 EST / 1250 GMT', '14:50:00'],
  ['Russian Central Bank Ruble Rate RUB73.6721 To Euro vs RUB74.4265', '14:46:00'],
  ['Russian Central Bank Ruble Rate RUB67.6698 To Dollar vs RUB68.8800', '14:46:00'],
  ['As If Oil Had Stopped Being a Bear -- Market Talk', '14:30:00'],
  ['Time to Lock in Profits in Long USD/RUB Positions, Says BCS -- Market Talk', '14:15:00'],
  ['National Bank Of Poland Zloty Exchange Rates', '14:15:00'],
];

class NewsTerminal extends HTMLElement {
  constructor() {
    super();
    this.attachShadow({ mode: 'open' });
    this.shadowRoot.innerHTML = `
      <style>
        :host {
          display: flex;
          margin-top: 4px;
          border-bottom: 1px solid #999;
          padding-bottom: 4px;
        }
        aside {
          display: flex;
          flex-direction: column;
          flex: none;
          width: 14px;
        }
        aside button {
          display: flex;
          height: 14px;
          border: 0;
          padding: 1px 2px;
          background: none;
        }
        aside h2 {
          flex: 1;
          width: 13px;
          margin: 0;
          padding-top: 2px;
          background: linear-gradient(#99b4d1, #b9d1ea);
          font: 11px/13px "Noto Sans", sans-serif;
          writing-mode: vertical-rl;
          transform: rotate(180deg);
        }
        .main { flex: 1; min-width: 0; }
        .box {
          display: flex;
          border-top: 1px solid #999;
          border-left: 1px solid #999;
          background: #fff;
        }
        table {
          flex: 1;
          table-layout: fixed;
          border-spacing: 0;
        }
        th {
          height: 23px;
          padding: 0 6px;
          border-bottom: 1px solid #ccc;
          background: linear-gradient(#fff 50%, #f4f5f7 50%);
          font-weight: 400;
          text-align: left;
        }
        td {
          height: 19px;
          padding: 0 4px 0 5px;
          border-bottom: 1px solid #bbb;
        }
        th:last-child, td:last-child {
          width: 129px;
          border-left: 1px solid #d0d0d0;
          text-align: right;
        }
        tr:nth-child(even) td { background: #e9e9e9; }
        tr:last-child td { border-bottom: 0; }
        td span { display: flex; align-items: center; gap: 5px; }
        scroll-rail { border-right: 4px solid #f0f0f0; }
        tab-strip {
          --tab-inset: 2px;
          --tab-pad: 10px;
        }
      </style>
      <aside><button title="Luk"><mt-icon name="close"></mt-icon></button><h2>Terminal</h2></aside>
      <div class="main">
        <div class="box">
          <table>
            <tr><th>Overskrift</th><th>Tid</th></tr>
            ${news.map(([title, time]) => `<tr><td><span><mt-icon name="news"></mt-icon>${title}</span></td><td>2015.12.07 ${time}</td></tr>`).join('')}
          </table>
          <scroll-rail before="0" size="20" after="1"></scroll-rail>
        </div>
        <tab-strip active="3" labels="Handel|Exposure|Kontohistorie|Nyheder:99|Alerts|Mailboks:11|Markedsplads:60|Signaler|Bibliotek|Experts|Journal"></tab-strip>
      </div>`;
  }
}
customElements.define('news-terminal', NewsTerminal);

class TradeApp extends HTMLElement {
  constructor() {
    super();
    this.attachShadow({ mode: 'open' });
    this.shadowRoot.innerHTML = `
      <style>
        :host {
          display: flex;
          flex-direction: column;
          min-height: 100%;
          overflow: hidden;
        }
        main { display: flex; flex: none; }
        .dock {
          display: flex;
          flex-direction: column;
          width: 256px;
          flex: none;
          border-bottom: 1px solid #999;
          box-sizing: border-box;
        }
        .dock dock-panel + dock-panel {
          flex: 1;
          border-top: 1px solid #999;
        }
        .desk {
          flex: 1;
          min-width: 0;
          margin-left: 1px;
          display: flex;
          flex-direction: column;
        }
        .windows {
          display: grid;
          grid-template-columns: 516fr 506fr;
          border-top: 1px solid #555;
          padding: 1px 2px 1px 1px;
          background: #b0b0b0;
        }
        .foot { --tab-pad: 13px; --tab-inset: 0px; border-bottom: 1px solid #fff; }
        .arrows { display: flex; gap: 13px; margin-left: auto; padding: 6px 6px 0 0; }
      </style>
      <menu-bar></menu-bar>
      <tool-bars></tool-bars>
      <main>
        <div class="dock">
          <dock-panel heading="Market Watch: 15:47:48" tabs="Symboler|Tickgraf" data-before="0" data-size="71" data-after="1"><market-watch></market-watch></dock-panel>
          <dock-panel heading="Navigator" tabs="Generelt|Favoritter" data-before="20" data-size="37" data-after="1"><nav-tree></nav-tree></dock-panel>
        </div>
        <div class="desk">
          <div class="windows">
            <chart-window symbol="EURUSD" data-sell="1.08 13 7" data-buy="1.08 14 5"></chart-window>
            <chart-window symbol="USDJPY" data-sell="123 44 9" data-buy="123 46 4" active></chart-window>
          </div>
          <tab-strip class="foot" plain labels="EURUSD,H4|USDJPY,H4" active="1">
            <span class="arrows">${svg(4, 8, '<path d="M4 0v8L0 4z" fill="#888"/>')}${svg(4, 8, '<path d="M0 0v8l4-4z" fill="#888"/>')}</span>
          </tab-strip>
        </div>
      </main>
      <news-terminal></news-terminal>`;
  }
}
customElements.define('trade-app', TradeApp);
</script>
</body>
</html>
